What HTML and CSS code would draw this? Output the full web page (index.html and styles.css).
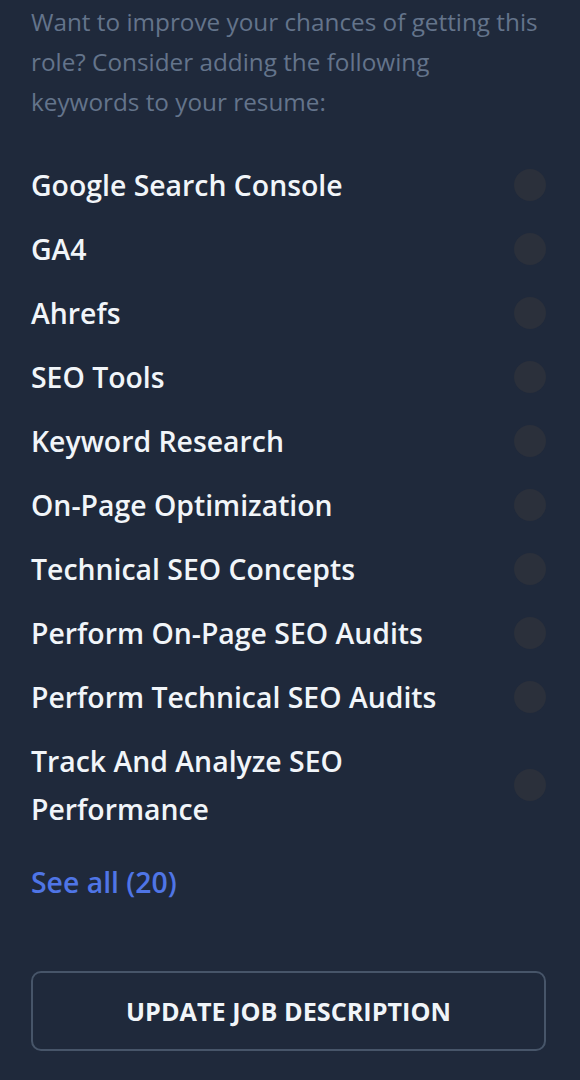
FILE: index.html
```html
<!DOCTYPE html>
<html lang="en">
<head>
<meta charset="utf-8">
<link rel="stylesheet" href="styles.css">
</head>
<body>
<div class="panel">
  <p class="intro">Want to improve your chances of getting this role? Consider adding the following<br>keywords to your resume:</p>
  <ul class="keywords">
    <li class="kw"><span class="kw-text">Google Search Console</span><span class="dot"></span></li>
    <li class="kw"><span class="kw-text">GA4</span><span class="dot"></span></li>
    <li class="kw"><span class="kw-text">Ahrefs</span><span class="dot"></span></li>
    <li class="kw"><span class="kw-text">SEO Tools</span><span class="dot"></span></li>
    <li class="kw"><span class="kw-text">Keyword Research</span><span class="dot"></span></li>
    <li class="kw"><span class="kw-text">On-Page Optimization</span><span class="dot"></span></li>
    <li class="kw"><span class="kw-text">Technical SEO Concepts</span><span class="dot"></span></li>
    <li class="kw"><span class="kw-text">Perform On-Page SEO Audits</span><span class="dot"></span></li>
    <li class="kw"><span class="kw-text">Perform Technical SEO Audits</span><span class="dot"></span></li>
    <li class="kw"><span class="kw-text">Track And Analyze SEO Performance</span><span class="dot"></span></li>
  </ul>
  <a class="see-all" href="#">See all (20)</a>
  <button class="update-btn" type="button">UPDATE JOB DESCRIPTION</button>
</div>
</body>
</html>
```

FILE: styles.css
```css
html, body {
  margin: 0;
  padding: 0;
  background: #1f293b;
}
body {
  font-family: "Open Sans", Lato, sans-serif;
}
.panel {
  width: 580px;
  height: 1080px;
  box-sizing: border-box;
  padding: 2px 34px 0 31px;
  display: flex;
  flex-direction: column;
  overflow: hidden;
}
.intro {
  margin: 0;
  color: #64748b;
  font-size: 24.3px;
  line-height: 40px;
}
.keywords {
  list-style: none;
  margin: 31px 0 0;
  padding: 0;
}
.kw {
  display: flex;
  align-items: center;
  justify-content: space-between;
  padding: 8px 0;
}
.kw-text {
  color: #f1f5f9;
  font-size: 28.4px;
  font-weight: 600;
  line-height: 48px;
  max-width: 430px;
}
.dot {
  width: 32px;
  height: 32px;
  border-radius: 50%;
  background: #2b303b;
  flex: none;
}
.see-all {
  margin-top: 17px;
  color: #4f75e6;
  font-size: 28.4px;
  font-weight: 600;
  line-height: 48px;
  text-decoration: none;
  align-self: flex-start;
}
.update-btn {
  margin-top: 65px;
  height: 80px;
  width: 515px;
  background: transparent;
  border: 2px solid #475569;
  border-radius: 10px;
  color: #f1f5f9;
  font-family: inherit;
  font-size: 25.2px;
  font-weight: 700;
  letter-spacing: 0;
}
```
